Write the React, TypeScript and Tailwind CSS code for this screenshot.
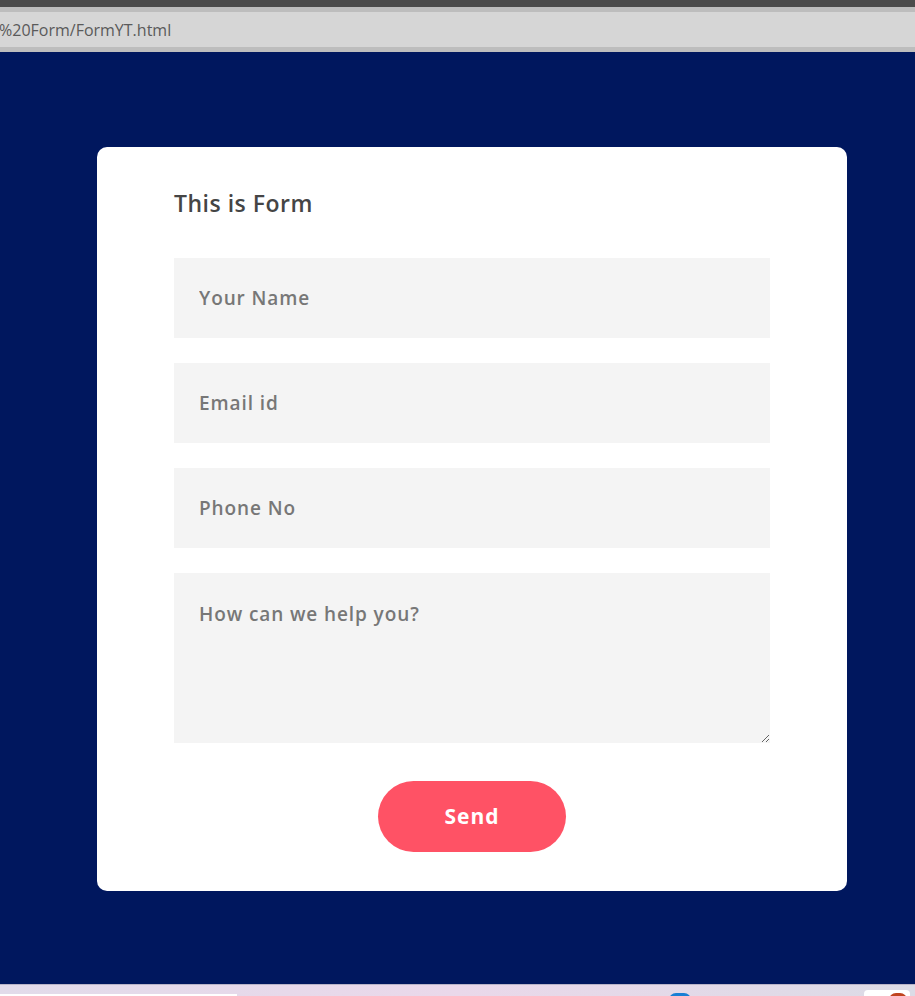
export default function App() {
  const font = { fontFamily: '"Open Sans", "Liberation Sans", sans-serif' };
  const field =
    "h-[80px] w-full bg-[#f4f4f4] px-[25px] text-[19px] font-semibold tracking-[0.9px] text-[#444] outline-none placeholder:text-[#777]";
  return (
    <div className="flex h-[996px] w-[915px] flex-col overflow-hidden" style={font}>
      {/* browser chrome */}
      <div className="h-[7px] bg-[#4b4b4b]" />
      <div className="h-[5px] bg-[#bdbdbd]" />
      <div className="flex h-[35px] items-center overflow-hidden bg-[#d6d6d6]">
        <span className="-ml-[1px] whitespace-nowrap text-[16px] text-[#5a5a5a]">%20Form/FormYT.html</span>
      </div>
      <div className="h-[5px] bg-[#bdbdbd]" />

      {/* page */}
      <div className="flex flex-1 items-start bg-[#00175e] pl-[97px] pt-[95px]">
        <div className="flex w-[750px] flex-col rounded-[10px] bg-white px-[77px] pb-[39px] pt-[40px]">
          <h2 className="text-[23px] font-semibold leading-[32px] tracking-[0.5px] text-[#454545]">This is Form</h2>
          <form className="mt-[39px] flex flex-col gap-[25px]">
            <input className={field} placeholder="Your Name" />
            <input className={field} placeholder="Email id" />
            <input className={field} placeholder="Phone No" />
            <textarea className={`${field} block h-[170px] pt-[27px]`} placeholder="How can we help you?" />
            <div className="mt-[13px] flex justify-center">
              <button
                type="button"
                className="h-[71px] w-[188px] rounded-full bg-[#ff5265] text-[21px] font-bold tracking-[1px] text-white"
              >
                Send
              </button>
            </div>
          </form>
        </div>
      </div>

      {/* taskbar */}
      <div className="relative h-[12px] border-t border-[#b9b4c8] bg-gradient-to-r from-[#e2dbea] via-[#ead8ea] to-[#dcdbe6]">
        <div className="absolute bottom-0 left-0 h-[2px] w-[237px] bg-white" />
        <div className="absolute left-[669px] top-[8px] h-[14px] w-[22px] rounded-full bg-[#1a7fd4]" />
        <div className="absolute left-[864px] top-[5px] h-[12px] w-[46px] rounded-[4px] bg-white" />
        <div className="absolute left-[889px] top-[8px] h-[14px] w-[18px] rounded-full bg-[#c0431e]" />
      </div>
    </div>
  );
}
